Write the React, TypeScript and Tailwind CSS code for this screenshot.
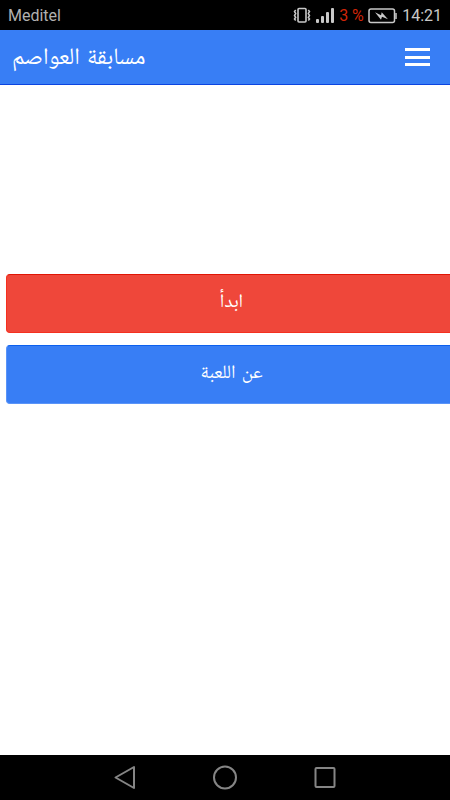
import React from "react";

function StatusBar() {
  return (
    <div className="flex h-[30px] items-center bg-black px-2 pt-px font-[Roboto,sans-serif] text-base text-[#c8c8c8]">
      <span className="flex-1 text-[#b0b0b0]">Meditel</span>
      <svg className="mr-[5px]" width="18" height="18" viewBox="0 0 18 18" fill="none" stroke="#c8c8c8">
        <rect x="5" y="1.5" width="8" height="13.5" rx="1" strokeWidth="1.6" />
        <path d="M2.7 3L1.5 4.5 2.7 6.5 1.5 8.5 2.7 10.5 1.5 12 2.7 13.5M15.3 3l1.2 1.5-1.2 2 1.2 2-1.2 2 1.2 1.5-1.2 1.5" strokeWidth="1.5" />
      </svg>
      <svg className="mb-px" width="18" height="16" viewBox="0 0 18 16" fill="#c8c8c8">
        <rect x="0" y="12" width="3" height="4" rx="1" />
        <rect x="5" y="9" width="3" height="7" rx="1" />
        <rect x="10" y="5" width="3" height="11" rx="1" />
        <rect x="15" y="1" width="3" height="15" rx="1" />
      </svg>
      <span className="mr-px ml-[5px] w-[26px] text-[#d02508]">3 %</span>
      <svg className="mr-[5px] ml-[2px]" width="29" height="16" viewBox="0 0 29 16" fill="none" stroke="#c8c8c8" strokeWidth="1.5">
        <rect x="1" y="1" width="25.5" height="13.5" rx="2" />
        <path d="M28 5v6" />
        <path d="M7 4.2l6 3 .7-3 6.3 7-6-2.5-1 3z" fill="#c8c8c8" stroke="none" />
      </svg>
      <span>14:21</span>
    </div>
  );
}

export default function App() {
  return (
    <div className="flex h-[800px] w-[450px] flex-col overflow-hidden bg-white font-['Noto_Naskh_Arabic','Noto_Sans_Arabic','DejaVu_Sans',sans-serif]">
      <StatusBar />
      <header className="flex h-[55px] items-center justify-between border-b border-[#0c44e0] bg-[#387ef5] pr-5 pl-3 text-white">
        <h1 dir="rtl" className="pt-1 text-[23.5px] leading-8 whitespace-nowrap [word-spacing:2px]">مسابقة العواصم</h1>
        <div className="flex flex-col gap-[4.5px]">
          <div className="h-[3px] w-[25px] bg-white" />
          <div className="h-[3px] w-[25px] bg-white" />
          <div className="h-[3px] w-[25px] bg-white" />
        </div>
      </header>
      <main className="flex flex-1 flex-col gap-3 pt-[189px] pl-1.5 text-white">
        <button dir="rtl" className="h-[59px] w-[451px] rounded border border-[#f5301f] border-t-[#e01505] bg-[#ef473a] pb-0.5 text-[19px] leading-6">ابدأ</button>
        <button dir="rtl" className="h-[59px] w-[451px] rounded border border-[#5a94f8] border-t-[#0c60ee] bg-[#387ef5] pb-0.5 text-[19px] leading-6 [word-spacing:2px]">عن اللعبة</button>
      </main>
      <nav className="flex h-[45px] items-center bg-black pl-[75px]">
        <svg width="300" height="45" viewBox="0 0 300 45" fill="none" stroke="#858585" strokeWidth="2" strokeLinejoin="round">
          <path d="M59 12v21L40.5 22.5z" />
          <circle cx="150" cy="22.5" r="11" />
          <rect x="240.5" y="13" width="19" height="19" rx="1" />
        </svg>
      </nav>
    </div>
  );
}
